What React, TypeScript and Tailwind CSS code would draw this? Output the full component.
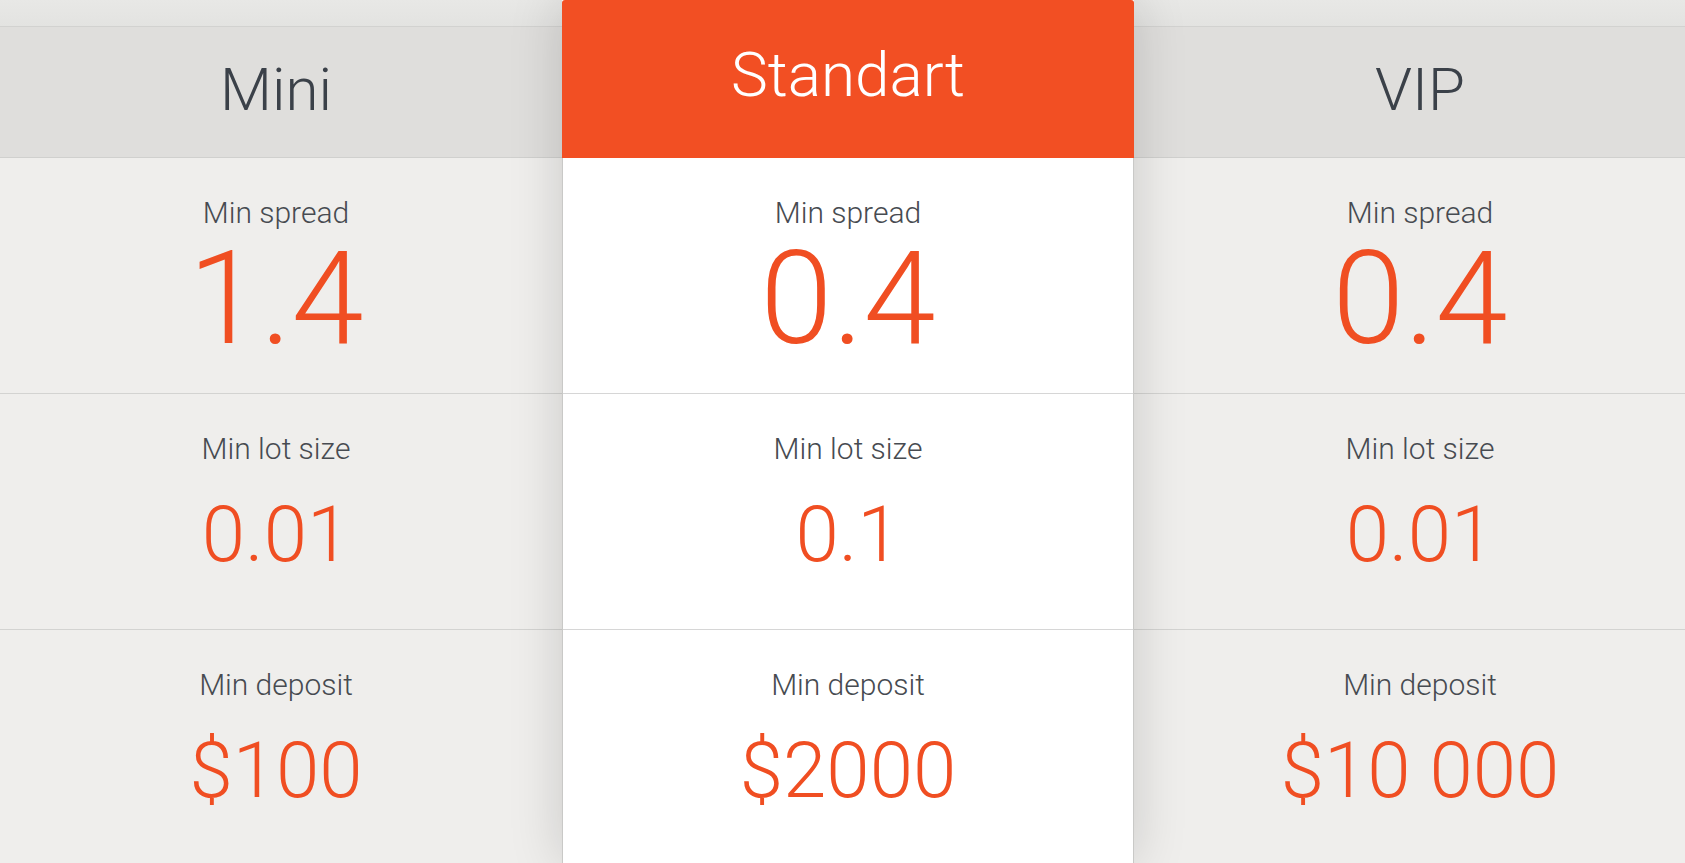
import React from "react";

type Plan = {
  name: string;
  spread: string;
  lot: string;
  deposit: string;
};

const plans: Plan[] = [
  { name: "Mini", spread: "1.4", lot: "0.01", deposit: "$100" },
  { name: "Standart", spread: "0.4", lot: "0.1", deposit: "$2000" },
  { name: "VIP", spread: "0.4", lot: "0.01", deposit: "$10 000" },
];

function Cell({ label, value, big, line }: { label: string; value: string; big?: boolean; line: string }) {
  return (
    <div className={`flex flex-col items-center border-b ${line} h-[236px] shrink-0`}>
      <div className="mt-[40px] h-[30px] text-[30px] leading-[30px] font-light text-[#474b51]">{label}</div>
      {big ? (
        <div className="mt-[6px] h-[130px] text-[130px] leading-[130px] font-light text-[#f04e22]">{value}</div>
      ) : (
        <div className="mt-[32px] h-[78px] text-[78px] leading-[78px] font-light text-[#f04e22] whitespace-pre">{value}</div>
      )}
    </div>
  );
}

function SideColumn({ plan, className }: { plan: Plan; className: string }) {
  return (
    <div className={`flex w-[572px] shrink-0 flex-col ${className}`}>
      <div className="h-[27px] shrink-0 bg-gradient-to-b from-[#e8e8e6] to-[#e3e3e1] border-b border-[#d2d2d0]" />
      <div className="h-[131px] shrink-0 bg-[#dfdedc] border-b border-[#d0d0ce] flex items-center justify-center">
        <span className="text-[60px] leading-none font-light text-[#3b4149] mt-[-4px]">{plan.name}</span>
      </div>
      <Cell label="Min spread" value={plan.spread} big line="border-[#d3d3d1]" />
      <Cell label="Min lot size" value={plan.lot} line="border-[#d3d3d1]" />
      <Cell label="Min deposit" value={plan.deposit} line="border-[#d3d3d1]" />
    </div>
  );
}

export default function App() {
  const [mini, standart, vip] = plans;
  return (
    <div
      className="flex h-[863px] w-full overflow-hidden bg-[#efeeec]"
      style={{ fontFamily: "Roboto, 'Liberation Sans', sans-serif" }}
    >
      <SideColumn plan={mini} className="ml-[-10px]" />

      {/* highlighted plan */}
      <div className="relative z-10 flex w-[572px] shrink-0 flex-col bg-white shadow-[0_0_50px_rgba(0,0,0,0.16)]">
        <div className="h-[158px] shrink-0 rounded-t-[3px] bg-[#f24f23] flex justify-center">
          <span className="mt-[40px] text-[62px] leading-[70px] font-light text-white">{standart.name}</span>
        </div>
        <div className="flex flex-col border-x border-[#c9c9c7]">
          <Cell label="Min spread" value={standart.spread} big line="border-[#d6d6d6]" />
          <Cell label="Min lot size" value={standart.lot} line="border-[#d6d6d6]" />
          <Cell label="Min deposit" value={standart.deposit} line="border-[#d6d6d6]" />
        </div>
      </div>

      <SideColumn plan={vip} className="" />
    </div>
  );
}
